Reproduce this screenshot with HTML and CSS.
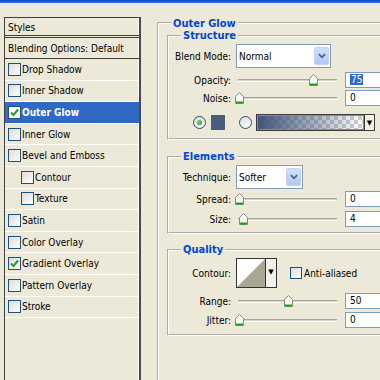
FILE: index.html
```html
<!DOCTYPE html>
<html lang="en">
<head>
    <meta charset="UTF-8">
    <meta name="viewport" content="width=device-width, initial-scale=1.0">
    <title>Layer Style - Outer Glow</title>
    <link rel="stylesheet" href="styles.css">
</head>
<body>
    <div class="title-bar"></div>
    <div class="dialog">
        <div class="styles-panel">
            <div class="panel-head">Styles</div>
            <div class="panel-blend">Blending Options: Default</div>
            <ul class="style-list">
                <li><span class="check"></span>Drop Shadow</li>
                <li><span class="check"></span>Inner Shadow</li>
                <li class="selected"><span class="check"><svg viewBox="0 0 11 11"><path d="M2 5.5 L4.5 8 L9 2.5"/></svg></span>Outer Glow</li>
                <li><span class="check"></span>Inner Glow</li>
                <li><span class="check"></span>Bevel and Emboss</li>
                <li class="sub"><span class="check"></span>Contour</li>
                <li class="sub"><span class="check"></span>Texture</li>
                <li><span class="check"></span>Satin</li>
                <li><span class="check"></span>Color Overlay</li>
                <li><span class="check"><svg viewBox="0 0 11 11"><path d="M2 5.5 L4.5 8 L9 2.5"/></svg></span>Gradient Overlay</li>
                <li><span class="check"></span>Pattern Overlay</li>
                <li><span class="check"></span>Stroke</li>
            </ul>
        </div>

        <div class="settings">
            <fieldset class="group outer">
                <legend>Outer Glow</legend>

                <fieldset class="group structure">
                    <legend>Structure</legend>
                    <div class="row row-select">
                        <label>Blend Mode:</label>
                        <div class="select blend"><span>Normal</span><i class="drop"><svg viewBox="0 0 9 6"><path d="M1 1 L4.5 4.5 L8 1"/></svg></i></div>
                    </div>
                    <div class="row mt4">
                        <label>Opacity:</label>
                        <div class="slider" style="--v:75"><div class="track"></div><svg class="thumb" viewBox="0 0 9 12"><path d="M0.5 11.5 V4.5 L4.5 0.5 L8.5 4.5 V11.5 Z"/><rect x="1" y="9.5" width="7" height="2"/></svg></div>
                        <div class="value"><span class="hilite">75</span></div>
                    </div>
                    <div class="row mt2">
                        <label>Noise:</label>
                        <div class="slider" style="--v:0"><div class="track"></div><svg class="thumb" viewBox="0 0 9 12"><path d="M0.5 11.5 V4.5 L4.5 0.5 L8.5 4.5 V11.5 Z"/><rect x="1" y="9.5" width="7" height="2"/></svg></div>
                        <div class="value">0</div>
                    </div>
                    <div class="row row-color mt8">
                        <span class="radio on"></span>
                        <span class="swatch"></span>
                        <span class="radio second"></span>
                        <div class="gradient"><span class="ramp"></span><i class="arrow">&#9660;</i></div>
                    </div>
                </fieldset>

                <fieldset class="group elements">
                    <legend>Elements</legend>
                    <div class="row row-select">
                        <label>Technique:</label>
                        <div class="select technique"><span>Softer</span><i class="drop"><svg viewBox="0 0 9 6"><path d="M1 1 L4.5 4.5 L8 1"/></svg></i></div>
                    </div>
                    <div class="row mt2">
                        <label>Spread:</label>
                        <div class="slider" style="--v:0"><div class="track"></div><svg class="thumb" viewBox="0 0 9 12"><path d="M0.5 11.5 V4.5 L4.5 0.5 L8.5 4.5 V11.5 Z"/><rect x="1" y="9.5" width="7" height="2"/></svg></div>
                        <div class="value">0</div>
                    </div>
                    <div class="row mt4">
                        <label>Size:</label>
                        <div class="slider" style="--v:4"><div class="track"></div><svg class="thumb" viewBox="0 0 9 12"><path d="M0.5 11.5 V4.5 L4.5 0.5 L8.5 4.5 V11.5 Z"/><rect x="1" y="9.5" width="7" height="2"/></svg></div>
                        <div class="value">4</div>
                    </div>
                </fieldset>

                <fieldset class="group quality">
                    <legend>Quality</legend>
                    <div class="row row-contour">
                        <label>Contour:</label>
                        <div class="contour">
                            <svg class="curve" viewBox="0 0 29 28" preserveAspectRatio="none"><polygon points="0,28 29,0 29,28"/></svg>
                            <i class="arrow">&#9660;</i>
                        </div>
                        <span class="check plain"></span>
                        <span class="check-label">Anti-aliased</span>
                    </div>
                    <div class="row mt5">
                        <label>Range:</label>
                        <div class="slider" style="--v:50"><div class="track"></div><svg class="thumb" viewBox="0 0 9 12"><path d="M0.5 11.5 V4.5 L4.5 0.5 L8.5 4.5 V11.5 Z"/><rect x="1" y="9.5" width="7" height="2"/></svg></div>
                        <div class="value">50</div>
                    </div>
                    <div class="row mt3">
                        <label>Jitter:</label>
                        <div class="slider" style="--v:0"><div class="track"></div><svg class="thumb" viewBox="0 0 9 12"><path d="M0.5 11.5 V4.5 L4.5 0.5 L8.5 4.5 V11.5 Z"/><rect x="1" y="9.5" width="7" height="2"/></svg></div>
                        <div class="value">0</div>
                    </div>
                </fieldset>
            </fieldset>
        </div>
    </div>
</body>
</html>
```

FILE: styles.css
```css
* {
    box-sizing: border-box;
}

html, body {
    margin: 0;
}

body {
    width: 380px;
    height: 380px;
    overflow: hidden;
    background-color: #ece9d8;
    font-family: "DejaVu Sans Condensed", "Liberation Sans", sans-serif;
    font-size: 10px;
    color: #000;
}

.title-bar {
    height: 3px;
    background: linear-gradient(#0843c6, #2d74ea);
}

.dialog {
    display: flex;
    padding: 13px 0 0 4px;
}

/* left list of styles */

.styles-panel {
    flex: none;
    width: 137px;
    height: 420px;
    margin-top: 1px;
    border: 1px solid #3f3f3f;
    border-right: 2px solid #4a4a4a;
    box-shadow: inset -1px 0 #fff;
}

.panel-head {
    height: 20px;
    line-height: 20px;
    padding-left: 3px;
    border-bottom: 3px double #3f3f3f;
}

.panel-blend {
    height: 21px;
    line-height: 21px;
    padding-left: 3px;
    border-bottom: 1px solid #3f3f3f;
}

.style-list {
    list-style: none;
    margin: 0;
    padding: 0;
}

.style-list li {
    display: flex;
    align-items: center;
    gap: 1px;
    height: 21.6px;
    padding-left: 3px;
    border-bottom: 1px solid #fff;
    white-space: nowrap;
}

.style-list li.sub {
    padding-left: 16px;
}

.style-list li.selected {
    background-color: #316ac5;
    color: #fff;
    font-weight: bold;
}

.check {
    flex: none;
    display: inline-flex;
    width: 13px;
    height: 13px;
    border: 1px solid #1c5180;
    background: linear-gradient(135deg, #dcdbd3, #fff);
}

.selected .check {
    background: #fff;
}

.check svg {
    width: 11px;
    height: 11px;
    fill: none;
    stroke: #21a121;
    stroke-width: 2;
}

/* right side settings */

.settings {
    flex: none;
    margin-left: 16px;
}

.group {
    margin: 0;
    padding: 0;
    min-width: 0;
    border: 2px groove #fff;
}

.group legend {
    margin-left: 12px;
    padding: 0 2px;
    line-height: 13px;
    font-size: 11px;
    font-weight: bold;
    color: #0046d5;
}

.outer {
    width: 260px;
    height: 420px;
}

.outer > legend {
    position: relative;
    top: 1px;
}

.structure, .elements, .quality {
    width: 240px;
    margin-left: 8px;
}

.structure {
    padding: 2px 0 7px;
}

.elements {
    margin-top: 10px;
    padding: 2px 0 5px;
}

.quality {
    margin-top: 9px;
    padding: 2px 0 6px;
}

.row {
    display: flex;
    align-items: center;
    height: 16px;
    white-space: nowrap;
}

.row label {
    flex: none;
    width: 62px;
    margin-right: 4px;
    text-align: right;
}

.row-select {
    height: 24px;
}

.row-contour {
    height: 30px;
}

.mt2 { margin-top: 2px; }
.mt3 { margin-top: 3px; }
.mt4 { margin-top: 4px; }
.mt5 { margin-top: 5px; }
.mt8 { margin-top: 8px; }

.select {
    display: flex;
    align-items: center;
    height: 24px;
    margin-left: 1px;
    padding: 2px 1px 2px 2px;
    border: 1px solid #7f9db9;
    background-color: #fff;
}

.select span {
    flex: 1;
}

.blend {
    width: 95px;
}

.technique {
    width: 67px;
}

.drop {
    display: flex;
    align-items: center;
    justify-content: center;
    width: 15px;
    height: 100%;
    background: linear-gradient(#d3e0fc, #b3c7f5);
    border: 1px solid #c3d3f7;
    border-radius: 2px;
}

.drop svg {
    width: 8px;
    height: 6px;
    fill: none;
    stroke: #4d6185;
    stroke-width: 2;
}

.slider {
    position: relative;
    flex: none;
    width: 105px;
    height: 16px;
    display: flex;
    align-items: center;
}

.track {
    flex: 1;
    height: 3px;
    margin: 0 3px;
    border-top: 1px solid #a8a592;
    border-bottom: 1px solid #fff;
    background-color: #d6d3c4;
}

.thumb {
    position: absolute;
    top: 2px;
    left: calc(var(--v) * 0.98px);
    width: 9px;
    height: 12px;
}

.thumb path {
    fill: #f7f7f3;
    stroke: #7d907f;
    stroke-width: 1;
}

.thumb rect {
    fill: #21a121;
}

.value {
    flex: none;
    width: 50px;
    height: 16px;
    margin-left: 5px;
    padding-left: 4px;
    line-height: 14px;
    border: 1px solid #7f9db9;
    background-color: #fff;
}

.hilite {
    background-color: #316ac5;
    color: #fff;
    padding: 0 1px;
}

/* colour / gradient row */

.row-color {
    height: 17px;
    padding-left: 24px;
}

.radio {
    flex: none;
    display: inline-flex;
    align-items: center;
    justify-content: center;
    width: 13px;
    height: 13px;
    border: 1px solid #1c5180;
    border-radius: 50%;
    background: linear-gradient(135deg, #dcdbd3, #fff);
}

.radio.on::after {
    content: "";
    width: 5px;
    height: 5px;
    border-radius: 50%;
    background: radial-gradient(circle at 40% 35%, #6fd36f, #1b9a1b);
}

.radio.second {
    margin-left: 14px;
}

.swatch {
    flex: none;
    width: 14px;
    height: 15px;
    margin-left: 5px;
    background-color: #495d7e;
}

.gradient {
    flex: none;
    display: flex;
    width: 119px;
    height: 17px;
    margin-left: 4px;
    border: 1px solid #3a3a3a;
}

.ramp {
    flex: 1;
    border: 1px solid #8a8a8a;
    background:
        linear-gradient(to right, #41567a, rgba(65, 86, 122, 0)),
        repeating-conic-gradient(#cfcfcf 0 25%, #fff 0 50%) 0 0 / 8px 8px;
}

.arrow {
    display: flex;
    align-items: center;
    justify-content: center;
    font-style: normal;
    font-size: 7px;
    font-family: "DejaVu Sans", sans-serif;
    background-color: #f1f0ea;
}

.gradient .arrow {
    width: 10px;
    border-left: 1px solid #3a3a3a;
}

/* contour picker */

.contour {
    flex: none;
    display: flex;
    width: 41px;
    height: 30px;
    margin-left: 1px;
    border: 1px solid #333;
}

.curve {
    width: 29px;
    height: 28px;
    background-color: #fff;
    border-right: 1px solid #333;
    fill: #aaa696;
}

.contour .arrow {
    flex: 1;
    align-items: flex-start;
    padding-top: 9px;
}

.check.plain {
    width: 12px;
    height: 12px;
    margin-left: 13px;
}

.check-label {
    margin-left: 2px;
}
```
